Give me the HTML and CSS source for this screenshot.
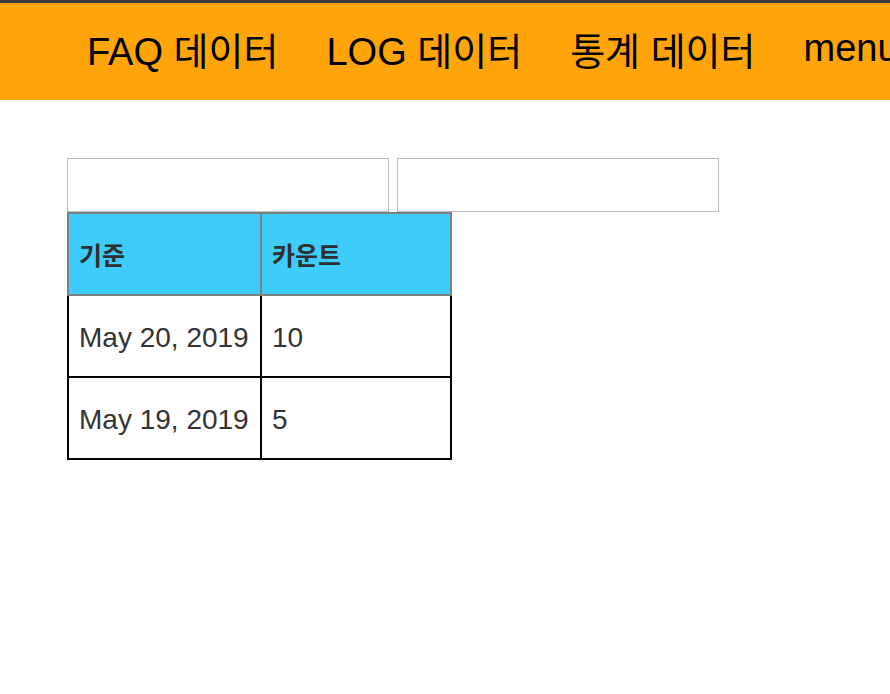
FILE: index.html
```html
<!DOCTYPE html>
<html lang="ko">
<head>
<meta charset="utf-8">
<title>통계 데이터</title>
<link rel="stylesheet" href="styles.css">
</head>
<body>
<div class="topline"></div>
<nav class="nav">
  <a class="nav-item">FAQ 데이터</a>
  <a class="nav-item">LOG 데이터</a>
  <a class="nav-item">통계 데이터</a>
  <a class="nav-item">menu</a>
</nav>
<main class="main">
  <div class="filters">
    <input class="filter-input" type="text">
    <input class="filter-input" type="text">
  </div>
  <table class="stats">
    <thead>
      <tr><th class="col-date">기준</th><th class="col-count">카운트</th></tr>
    </thead>
    <tbody>
      <tr><td>May 20, 2019</td><td>10</td></tr>
      <tr><td>May 19, 2019</td><td>5</td></tr>
    </tbody>
  </table>
</main>
</body>
</html>
```

FILE: styles.css
```css
html, body {
  margin: 0;
  padding: 0;
  background: #ffffff;
}

body {
  font-family: "Liberation Sans", "Noto Sans CJK KR", sans-serif;
  overflow: hidden;
}

.topline {
  height: 3px;
  background: #3b3b3b;
}

.nav {
  height: 97px;
  box-sizing: border-box;
  padding: 0 0 6px 87px;
  background: #ffa509;
  display: flex;
  align-items: center;
  gap: 48px;
  overflow: hidden;
  white-space: nowrap;
}

.nav-item {
  font-size: 38px;
  color: #000000;
  text-decoration: none;
  flex: none;
}

.main {
  padding: 58px 0 0 67px;
}

.filters {
  display: flex;
  gap: 8px;
}

.filter-input {
  width: 322px;
  height: 54px;
  box-sizing: border-box;
  margin: 0;
  padding: 0;
  border: 1px solid #bdbdbd;
  background: #ffffff;
  outline: none;
}

.stats {
  border-collapse: separate;
  border-spacing: 0;
  font-size: 28px;
  color: #333333;
}

.stats th,
.stats td {
  height: 80px;
  padding: 0 10px;
  text-align: left;
  vertical-align: middle;
  white-space: nowrap;
}

.stats td {
  height: 76px;
  padding-top: 4px;
}

.stats th {
  background: #3ecdfa;
  font-size: 25px;
  font-weight: bold;
  color: #2f2f2f;
  border-top: 2px solid #808080;
  border-bottom: 2px solid #808080;
  border-left: 2px solid #808080;
}

.stats th:last-child {
  border-right: 2px solid #808080;
}

.stats td {
  border-bottom: 2px solid #000000;
  border-left: 2px solid #000000;
}

.stats td:last-child {
  border-right: 2px solid #000000;
}

.col-date {
  width: 171px;
}

.col-count {
  width: 168px;
}
```
